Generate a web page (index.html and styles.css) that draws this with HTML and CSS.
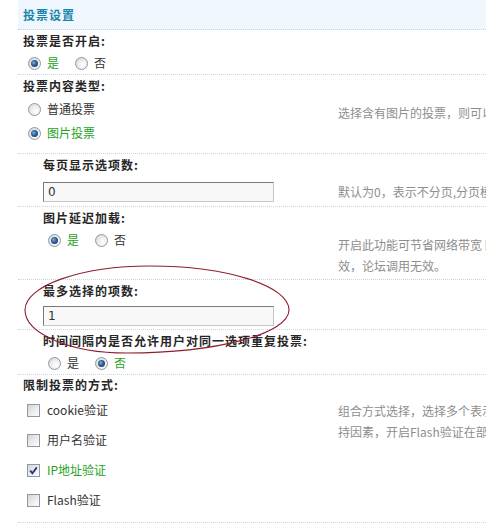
FILE: index.html
```html
<!DOCTYPE html>
<html lang="zh-CN">
<head>
<meta charset="utf-8">
<title>投票设置</title>
<link rel="stylesheet" href="styles.css">
</head>
<body>
<div class="page">
  <div class="panel">
    <div class="head">投票设置</div>

    <div class="sec">
      <div class="lbl">投票是否开启:</div>
      <div class="row">
        <div class="ctl">
          <div class="opts">
            <span class="opt on"><span class="radio checked"></span>是</span>
            <span class="opt"><span class="radio"></span>否</span>
          </div>
        </div>
        <div class="desc"></div>
      </div>
    </div>

    <div class="sec">
      <div class="lbl">投票内容类型:</div>
      <div class="row">
        <div class="ctl ctl-list">
          <div class="opt opt-v"><span class="radio"></span>普通投票</div>
          <div class="opt opt-v on"><span class="radio checked"></span>图片投票</div>
        </div>
        <div class="desc">选择含有图片的投票，则可以在投票选项中上传图片并显示</div>
      </div>
    </div>

    <div class="sec sub">
      <div class="lbl">每页显示选项数:</div>
      <div class="row">
        <div class="ctl ctl-input-a"><input class="inp" type="text" value="0"></div>
        <div class="desc">默认为0，表示不分页,分页模式下每页显示的选项数</div>
      </div>
    </div>

    <div class="sec sub">
      <div class="lbl">图片延迟加载:</div>
      <div class="row">
        <div class="ctl">
          <div class="opts">
            <span class="opt on"><span class="radio checked"></span>是</span>
            <span class="opt"><span class="radio"></span>否</span>
          </div>
        </div>
        <div class="desc">开启此功能可节省网络带宽 图片浏览到时才加载，帖子内有<br>效，论坛调用无效。</div>
      </div>
    </div>

    <div class="sec sub">
      <div class="lbl">最多选择的项数:</div>
      <div class="row">
        <div class="ctl ctl-input-b"><input class="inp" type="text" value="1"></div>
        <div class="desc"></div>
      </div>
    </div>

    <div class="sec sub">
      <div class="lbl">时间间隔内是否允许用户对同一选项重复投票:</div>
      <div class="row">
        <div class="ctl">
          <div class="opts">
            <span class="opt"><span class="radio"></span>是</span>
            <span class="opt on"><span class="radio checked"></span>否</span>
          </div>
        </div>
        <div class="desc"></div>
      </div>
    </div>

    <div class="sec">
      <div class="lbl lbl-tight">限制投票的方式:</div>
      <div class="row">
        <div class="ctl ctl-checks">
          <div class="chk-item"><span class="check"></span>cookie验证</div>
          <div class="chk-item"><span class="check"></span>用户名验证</div>
          <div class="chk-item on"><span class="check"><svg viewBox="0 0 11 11" width="11" height="11"><path d="M2.2 5.6 L4.4 8.2 L8.8 2.4" fill="none" stroke="#22397a" stroke-width="1.8"/></svg></span>IP地址验证</div>
          <div class="chk-item"><span class="check"></span>Flash验证</div>
        </div>
        <div class="desc">组合方式选择，选择多个表示同时验证，验证越多越安全，但也越不支<br>持因素，开启Flash验证在部分浏览器下可能无法投票</div>
      </div>
    </div>
  </div>

  <svg class="mark" width="486" height="524" viewBox="0 0 486 524">
    <path d="M25 310 C25 285.7 81 266 150 266 C226.7 266 289 285.7 289 310 C289 333.7 216.4 353 127 353 C70.7 353 25 333.7 25 310 Z" fill="none" stroke="#8d1f2e" stroke-width="1.1"/>
  </svg>
</div>
</body>
</html>
```

FILE: styles.css
```css
html, body {
  margin: 0;
  padding: 0;
  background: #fff;
  overflow: hidden;
}

body {
  font-family: "Noto Sans CJK SC", "Liberation Sans", sans-serif;
  font-size: 12px;
  line-height: 22px;
  color: #333;
}

.page {
  position: relative;
  width: 760px;
  height: 524px;
}

.panel {
  margin-left: 18px;
}

.head {
  height: 29px;
  line-height: 29px;
  padding-left: 5px;
  background: #eff6fd;
  border-bottom: 1px dotted #c4d4de;
  color: #1685a9;
  font-weight: bold;
  letter-spacing: 1px;
}

.sec {
  border-bottom: 1px dotted #c9d6de;
}

.lbl {
  height: 22px;
  line-height: 22px;
  padding-left: 5px;
  font-weight: bold;
  color: #262626;
  letter-spacing: 1px;
  white-space: nowrap;
}

.lbl-tight {
  height: 20px;
  line-height: 20px;
}

.row {
  display: grid;
  grid-template-columns: 320px 1fr;
}

.ctl {
  padding-left: 5px;
}

.sub .lbl,
.sub .ctl {
  padding-left: 25px;
}

.ctl-list {
  padding-bottom: 8px;
}

.ctl-input-a {
  padding-top: 6px;
  padding-bottom: 4px;
}

.ctl-input-b {
  padding-top: 4px;
  padding-bottom: 3px;
}

.ctl-checks {
  padding-bottom: 7px;
}

.desc {
  padding-top: 5px;
  padding-bottom: 3px;
  line-height: 21px;
  color: #8e8e8e;
  white-space: nowrap;
}

.opts {
  display: flex;
  align-items: center;
  height: 22px;
}

.opt {
  display: flex;
  align-items: center;
  margin-right: 11px;
}

.opt-v {
  height: 24px;
}

.on {
  color: #25a325;
}

.radio {
  position: relative;
  flex: none;
  width: 13px;
  height: 13px;
  margin: 0 6px 0 5px;
  box-sizing: border-box;
  border-radius: 50%;
  border: 1px solid #8c98a3;
  background: radial-gradient(circle at 65% 65%, #ffffff 0%, #eeeeee 45%, #cfcfcf 100%);
}

.radio.checked::after {
  content: "";
  position: absolute;
  left: 2px;
  top: 2px;
  width: 7px;
  height: 7px;
  border-radius: 50%;
  background: radial-gradient(circle at 40% 40%, #7fb0de 0%, #2a5b94 45%, #14335f 100%);
}

.inp {
  display: block;
  width: 231px;
  height: 20px;
  margin: 0;
  box-sizing: border-box;
  border: 1px solid;
  border-color: #7a7a7a #c6c6c6 #c6c6c6 #7a7a7a;
  background: #f8f8f8;
  padding: 0 4px;
  font-family: "DejaVu Sans", sans-serif;
  font-size: 12px;
  color: #333;
  outline: none;
}

.chk-item {
  display: flex;
  align-items: center;
  height: 30px;
}

.check {
  flex: none;
  display: flex;
  align-items: center;
  justify-content: center;
  width: 13px;
  height: 13px;
  margin: 0 7px 0 4px;
  box-sizing: border-box;
  border: 1px solid #8d99a4;
  background: linear-gradient(135deg, #d4d4d4 0%, #efefef 60%, #fcfcfc 100%);
}

.mark {
  position: absolute;
  left: 0;
  top: 0;
  pointer-events: none;
}
```
